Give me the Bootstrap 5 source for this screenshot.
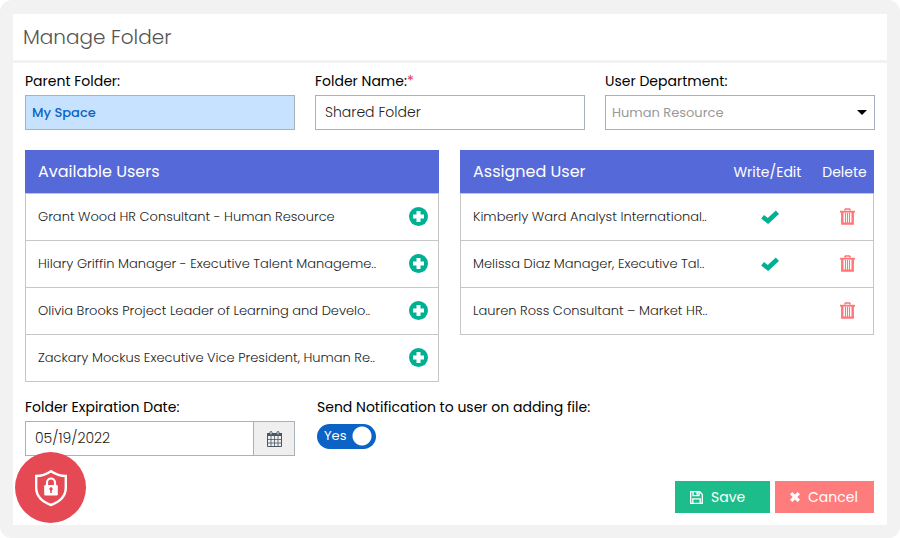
<!DOCTYPE html>
<html lang="en">
<head>
<meta charset="utf-8">
<meta name="viewport" content="width=device-width, initial-scale=1">
<title>Manage Folder</title>
<link href="https://cdn.jsdelivr.net/npm/bootstrap@5.3.0/dist/css/bootstrap.min.css" rel="stylesheet">
<style>
  body { font-family: Poppins, Inter, "Open Sans", sans-serif; font-size: 14px; line-height: 20px; color: #111; background: #fff; }
  .frame { background: #f2f2f2; border-radius: 12px; padding: 14px 13px 13px; }
  .panel-head { border-bottom: 3px solid #f2f2f2; padding: 8px 10px; }
  .panel-head h1 { font-size: 20px; line-height: 30px; font-weight: 300; color: #555; }
  .panel-main { padding: 8px 12px 12px; gap: 20px; }
  .fields { display: grid; grid-template-columns: repeat(3, 1fr); gap: 20px; }
  .lists { display: grid; grid-template-columns: repeat(2, 1fr); gap: 21px; padding-right: 1px; }
  .extras { display: grid; grid-template-columns: 270px 1fr; gap: 22px; margin-top: -5px; }
  .field-label { display: block; margin-bottom: 4px; color: #000; }
  .field-box { height: 35px; border: 1px solid #a9b1ba; border-radius: 0; padding: 0 9px; font-size: 14px; font-weight: 300; color: #222; }
  .field-parent { background: #c7e2ff; color: #0b63c5; font-size: 13px; font-weight: 500; padding: 0 6px; }
  .field-dept { padding: 0 30px 0 6px; color: #999; border-color: #a6b0c0; font-size: 13px; font-weight: 400;
    background-image: url("data:image/svg+xml,%3Csvg xmlns='http://www.w3.org/2000/svg' viewBox='0 0 10 5'%3E%3Cpath d='M0 0h10L5 5z'/%3E%3C/svg%3E");
    background-size: 10px 5px; background-position: right 7px center; }
  .cal-btn { width: 42px; padding: 0; border: 1px solid #a9b1ba; border-radius: 0; background: #efefef; color: #4a5663; }
  .user-table { border: 1px solid #c6c6c6; border-top: 0; color: #222; }
  .user-table th { height: 43px; background: #5669d9; color: #fff; font-size: 16px; font-weight: 400; padding: 2px 12px 0; vertical-align: middle; box-shadow: none; border: 1px solid #5669d9; border-top: 0; border-bottom-color: #c6c6c6; }
  .user-table th.head-small { font-size: 14px; padding: 2px 0 0; text-align: center; }
  .user-table td { height: 47px; padding: 0 12px; font-size: 13px; font-weight: 300; vertical-align: middle; border-top: 1px solid #c6c6c6; background: #fff; white-space: nowrap; }
  .user-table td.cell-icon { padding: 0 0 0 6px; text-align: center; }
  .user-table td.col-add { padding: 0; }
  .col-add { width: 40px; } .col-edit { width: 101px; } .col-del { width: 60px; }
  .icon-btn { line-height: 0; border: 0; padding: 0; background: none; vertical-align: middle; }
  .toggle { position: relative; display: block; width: 59px; height: 25px; margin-top: 7px; }
  .toggle .form-check-input { width: 59px; height: 25px; margin: 0; float: none; border: 0; border-radius: 13px; background: radial-gradient(circle at 45px 12px, #fff 9px, #0b63c5 10px); }
  .toggle-text { position: absolute; left: 7px; top: 2px; color: #fff; font-size: 13px; pointer-events: none; }
  .actions { gap: 5px; padding-right: 1px; }
  .act { height: 32px; border: 0; border-radius: 0; color: #fff; font-size: 14px; padding: 0 15px; }
  .act-save { width: 95px; background: #1cbd8a; }
  .act-cancel { width: 99px; background: #ff7c7c; }
  .secure { position: absolute; left: 15px; bottom: 15px; width: 71px; height: 71px; border: 0; background: #e54a54; }
</style>
<script src="https://cdn.jsdelivr.net/npm/bootstrap@5.3.0/dist/js/bootstrap.bundle.min.js"></script>
</head>
<body>
<svg class="d-none" xmlns="http://www.w3.org/2000/svg">
  <symbol id="i-plus" viewBox="0 0 19 19"><circle cx="9.5" cy="9.5" r="9.5" fill="#00b092"/><path d="M7.500 4h4v3.500H15v4h-3.500V15h-4v-3.500H4v-4h3.500z" fill="#fff"/></symbol>
  <symbol id="i-check" viewBox="0 0 18 14"><path d="M1.600 6.800 7 11 16.400 2.200" fill="none" stroke="#00b092" stroke-width="4.600"/></symbol>
  <symbol id="i-trash" viewBox="0 0 15 17"><g fill="none" stroke="#ff7676"><path d="M4.500 2.500 5.500 1h4l1 1.500" stroke-width="1.400"/><path d="M0 3.700h15" stroke-width="1.800"/><path d="M2.300 4v11.600h10.400V4" stroke-width="2.400"/><path d="M5.500 5v10M7.500 5v10M9.500 5v10" stroke-width="1.100"/></g></symbol>
</svg>
<div class="frame position-relative min-vh-100 d-flex">
  <main class="bg-white flex-grow-1 d-flex flex-column">
    <header class="panel-head"><h1 class="m-0">Manage Folder</h1></header>
    <form class="panel-main d-flex flex-column flex-grow-1">
      <div class="fields">
        <div>
          <label class="field-label" for="parent">Parent Folder:</label>
          <input class="form-control field-box field-parent" id="parent" type="text" value="My Space" readonly>
        </div>
        <div>
          <label class="field-label" for="fname">Folder Name:<span class="text-danger">*</span></label>
          <input class="form-control field-box" id="fname" type="text" value="Shared Folder">
        </div>
        <div>
          <label class="field-label" for="dept">User Department:</label>
          <select class="form-select field-box field-dept" id="dept"><option>Human Resource</option></select>
        </div>
      </div>

      <div class="lists">
        <div>
          <table class="table user-table m-0">
            <thead><tr><th scope="col" colspan="2">Available Users</th></tr></thead>
            <tbody>
              <tr><td>Grant Wood HR Consultant - Human Resource</td><td class="cell-icon col-add"><button type="button" class="icon-btn" aria-label="Add Grant Wood"><svg width="19" height="19"><use href="#i-plus"/></svg></button></td></tr>
              <tr><td>Hilary Griffin Manager - Executive Talent Manageme..</td><td class="cell-icon col-add"><button type="button" class="icon-btn" aria-label="Add Hilary Griffin"><svg width="19" height="19"><use href="#i-plus"/></svg></button></td></tr>
              <tr><td>Olivia Brooks Project Leader of Learning and Develo..</td><td class="cell-icon col-add"><button type="button" class="icon-btn" aria-label="Add Olivia Brooks"><svg width="19" height="19"><use href="#i-plus"/></svg></button></td></tr>
              <tr><td>Zackary Mockus Executive Vice President, Human Re..</td><td class="cell-icon col-add"><button type="button" class="icon-btn" aria-label="Add Zackary Mockus"><svg width="19" height="19"><use href="#i-plus"/></svg></button></td></tr>
            </tbody>
          </table>
        </div>
        <div>
          <table class="table user-table m-0">
            <thead><tr><th scope="col">Assigned User</th><th scope="col" class="head-small col-edit">Write/Edit</th><th scope="col" class="head-small col-del">Delete</th></tr></thead>
            <tbody>
              <tr><td>Kimberly Ward Analyst International..</td><td class="cell-icon"><svg width="18" height="14" role="img" aria-label="Can edit"><use href="#i-check"/></svg></td><td class="cell-icon"><button type="button" class="icon-btn" aria-label="Delete Kimberly Ward"><svg width="15" height="17"><use href="#i-trash"/></svg></button></td></tr>
              <tr><td>Melissa Diaz Manager, Executive Tal..</td><td class="cell-icon"><svg width="18" height="14" role="img" aria-label="Can edit"><use href="#i-check"/></svg></td><td class="cell-icon"><button type="button" class="icon-btn" aria-label="Delete Melissa Diaz"><svg width="15" height="17"><use href="#i-trash"/></svg></button></td></tr>
              <tr><td>Lauren Ross Consultant – Market HR..</td><td class="cell-icon"></td><td class="cell-icon"><button type="button" class="icon-btn" aria-label="Delete Lauren Ross"><svg width="15" height="17"><use href="#i-trash"/></svg></button></td></tr>
            </tbody>
          </table>
        </div>
      </div>

      <div class="extras">
        <div>
          <label class="field-label" for="expiry">Folder Expiration Date:</label>
          <div class="input-group flex-nowrap">
            <input class="form-control field-box" id="expiry" type="text" value="05/19/2022">
            <button type="button" class="btn cal-btn" aria-label="Open calendar">
              <svg width="15" height="16" viewBox="0 0 15 16" fill="none" stroke="currentColor"><path d="M.5 2.500h14v13H.5z"/><path d="M0 3.500h15" stroke-width="3"/><path d="M4 5v10.500M7.500 5v10.500M11 5v10.500M.5 8.500h14M.5 12h14" stroke-width=".8"/><rect x="3" y=".5" width="2" height="3.500" rx="1" fill="#efefef"/><rect x="10" y=".5" width="2" height="3.500" rx="1" fill="#efefef"/></svg>
            </button>
          </div>
        </div>
        <div>
          <label class="field-label mb-0" for="notify">Send Notification to user on adding file:</label>
          <div class="toggle form-switch p-0">
            <input class="form-check-input" type="checkbox" role="switch" id="notify" checked>
            <span class="toggle-text" aria-hidden="true">Yes</span>
          </div>
        </div>
      </div>

      <div class="actions d-flex justify-content-end mt-auto">
        <button type="submit" class="btn act act-save d-flex align-items-center gap-2">
          <svg width="13" height="13" viewBox="0 0 13 13" fill="none" stroke="currentColor" stroke-width="1.300"><path d="M.7.7h9L12.300 3.500v8.800H.7z"/><path d="M3 .7v4h6v-4M2.800 12V7.800h7.400V12"/><path d="M7.300 1v2.600" stroke-width="1.800"/></svg>
          Save</button>
        <button type="button" class="btn act act-cancel d-flex align-items-center gap-2">
          <svg width="10" height="10" viewBox="0 0 10 10" stroke="currentColor" stroke-width="3.300"><path d="m1.200 1.200 7.600 7.600M8.800 1.200 1.200 8.800"/></svg>
          Cancel</button>
      </div>
    </form>
  </main>
  <button type="button" class="secure rounded-circle d-flex align-items-center justify-content-center p-0" aria-label="Security">
    <svg width="34" height="38" viewBox="0 0 34 38"><path d="M17 2.200C12.500 5.200 7.500 7 2.200 7v11.500c0 9 6.500 14.500 14.800 17.500 8.300-3 14.800-8.500 14.800-17.500V7C26.500 7 21.500 5.200 17 2.200z" fill="none" stroke="#fff" stroke-width="2.400"/><path d="M13 17v-3.500a4 4 0 0 1 8 0V17" fill="none" stroke="#fff" stroke-width="2.200"/><rect x="10.200" y="16" width="13.600" height="10.500" rx="1.200" fill="#fff"/><path d="M17 18.200a1.700 1.700 0 0 1 .8 3.200v2.600h-1.600v-2.600a1.700 1.700 0 0 1 .8-3.200z" fill="#e54a54"/></svg>
  </button>
</div>
</body>
</html>
